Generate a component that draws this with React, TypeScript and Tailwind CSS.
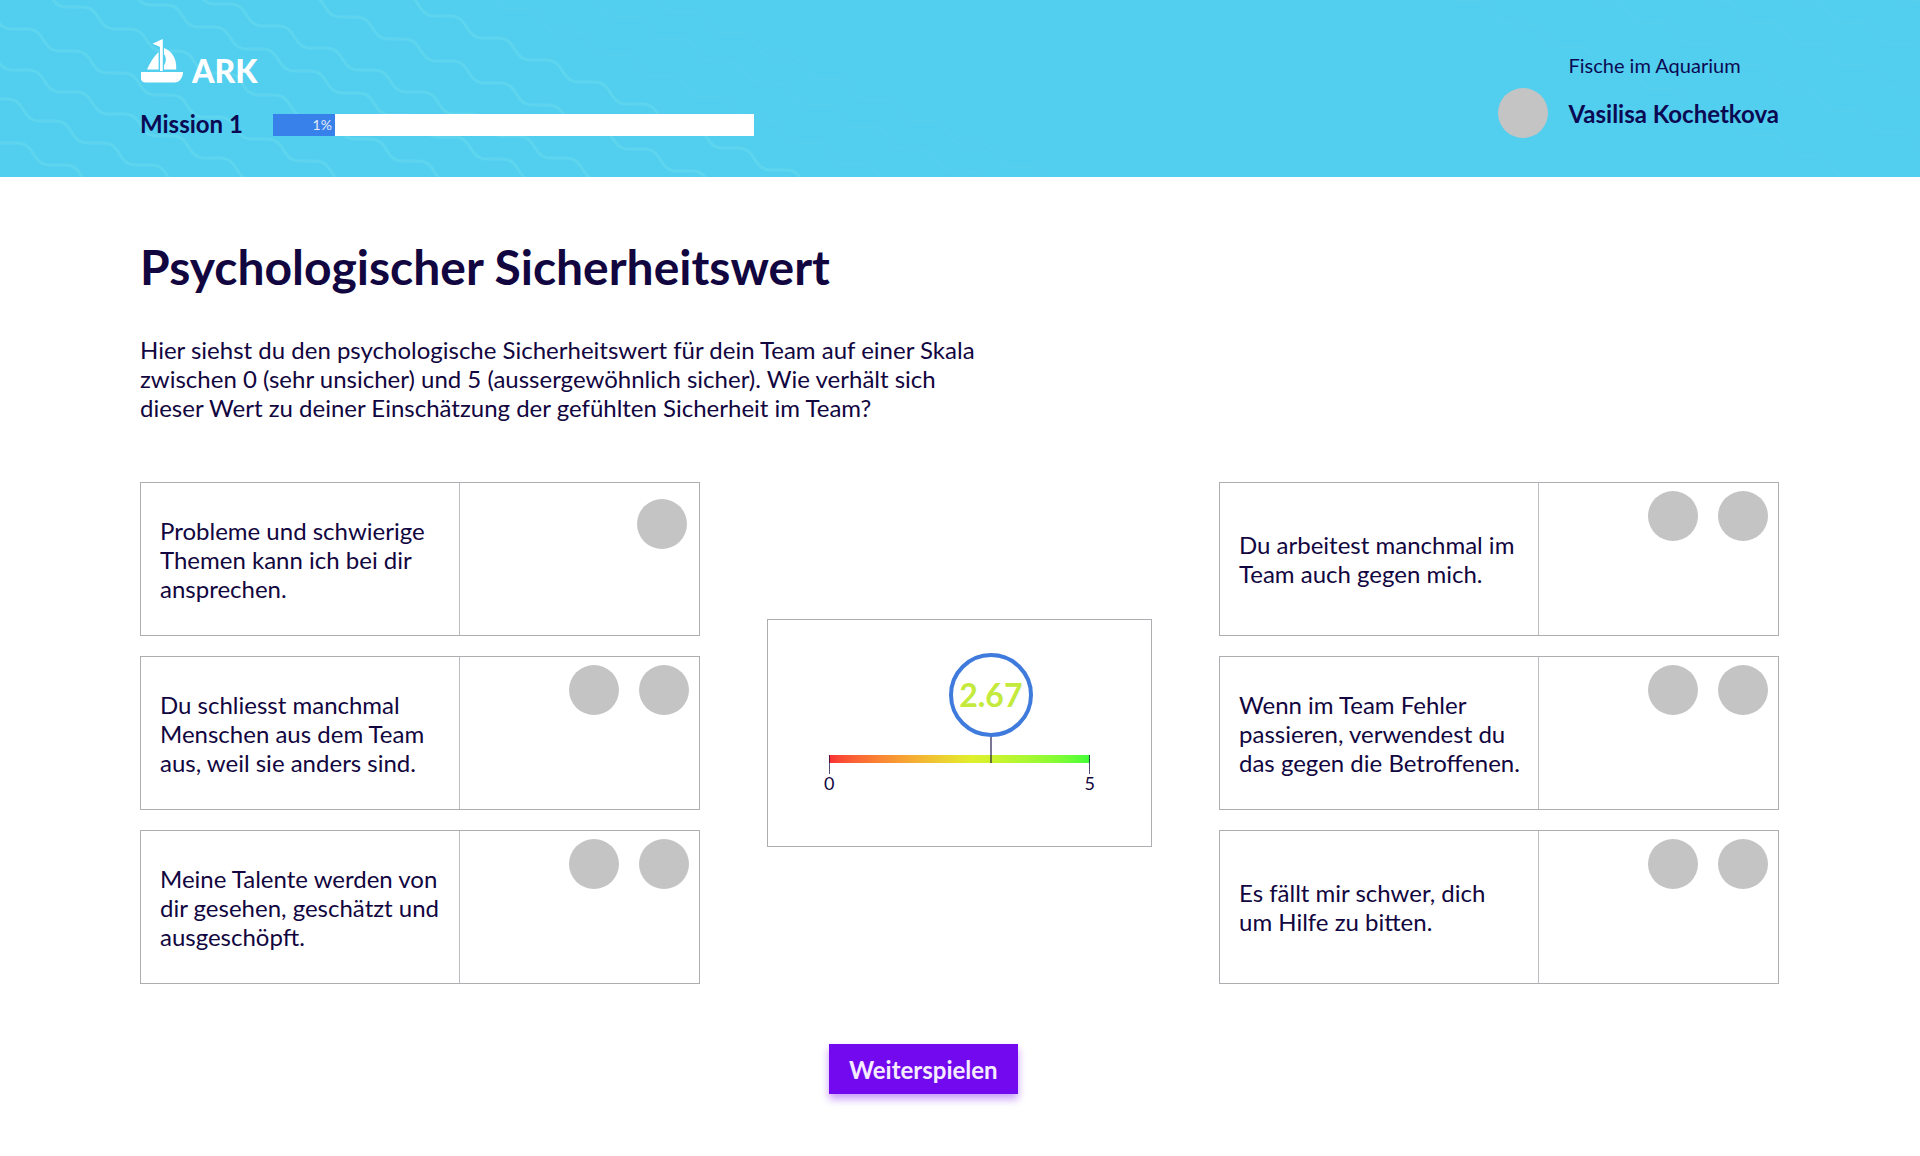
const waveStep = ' h15 c19 0 14 22 33 22';

const waves = [
  { x: -94, y: 99 },
  { x: -56, y: 77 },
  { x: -83, y: 26 },
  { x: -36, y: 7 },
  { x: -29, y: -37 },
  { x: 7, y: -61 },
  { x: 119, y: -40 },
  { x: 245, y: -27 },
  { x: 339, y: -28 },
  { x: 415, y: -34, faint: true },
  { x: 521, y: -27, faint: true },
  { x: 581, y: -32, faint: true },
  { x: 1416, y: -20, faint: true },
  { x: 1500, y: -44, faint: true },
  { x: 1610, y: -44, faint: true },
  { x: 1700, y: -44, faint: true },
  { x: 1800, y: -44, faint: true },
];

function Waves() {
  return (
    <svg
      className="pointer-events-none absolute inset-0 h-full w-full"
      fill="none"
      strokeWidth="3"
      aria-hidden="true"
    >
      {waves.map((w) => (
        <path
          key={`${w.x}:${w.y}`}
          d={`M${w.x} ${w.y}${waveStep.repeat(12)}`}
          stroke="#7ce8f6"
          strokeOpacity={w.faint ? 0.08 : 0.28}
        />
      ))}
    </svg>
  );
}

function BoatIcon() {
  return (
    <svg className="h-11 w-[42px]" viewBox="0 0 42 44" fill="#fff" aria-hidden="true">
      <path d="M19 1.2 L21.8 0 V32 H19 V8 L17 7 L11.4 4.8 Z" />
      <path d="M17.6 13 V30.6 H6 C9.5 23 12.5 18 17.6 13 Z" />
      <path d="M23 9 C31.5 12.5 36 20 35.2 30.6 H23 V26.5 C25.5 22.5 25.5 18.5 23 15 Z" />
      <path d="M0 33 H42 C42 38.5 38.5 43.5 33.5 43.5 H4.5 C2 43.5 0 42 0 39.5 Z" />
    </svg>
  );
}

function Avatar() {
  return <span className="block size-[50px] shrink-0 rounded-full bg-[#c4c4c4]" />;
}

type Item = { text: string; avatars: number };

const leftItems: Item[] = [
  { text: 'Probleme und schwierige\nThemen kann ich bei dir\nansprechen.', avatars: 1 },
  { text: 'Du schliesst manchmal\nMenschen aus dem Team\naus, weil sie anders sind.', avatars: 2 },
  { text: 'Meine Talente werden von\ndir gesehen, geschätzt und\nausgeschöpft.', avatars: 2 },
];

const rightItems: Item[] = [
  { text: 'Du arbeitest manchmal im\nTeam auch gegen mich.', avatars: 2 },
  { text: 'Wenn im Team Fehler\npassieren, verwendest du\ndas gegen die Betroffenen.', avatars: 2 },
  { text: 'Es fällt mir schwer, dich\num Hilfe zu bitten.', avatars: 2 },
];

function Column({ items }: { items: Item[] }) {
  return (
    <ul className="flex flex-col gap-5">
      {items.map((item) => (
        <li
          key={item.text}
          className="grid min-h-[154px] grid-cols-[320fr_239fr] border border-[#adadb2]"
        >
          <p className="flex items-center border-r border-[#bdbdc1] pl-[19px] text-2xl leading-[29px] whitespace-pre-line">
            {item.text}
          </p>
          <div
            className={
              item.avatars === 1
                ? 'flex justify-end gap-5 pt-4 pr-3'
                : 'flex justify-end gap-5 pt-2 pr-[10px]'
            }
          >
            {Array.from({ length: item.avatars }, (_, i) => (
              <Avatar key={i} />
            ))}
          </div>
        </li>
      ))}
    </ul>
  );
}

function Scale() {
  return (
    <div className="self-center border border-[#adadb2] px-[61px] pt-[33px] pb-[52px]">
      <div className="relative h-[102px]">
        <div className="absolute top-0 left-[62%] flex size-[84px] -translate-x-1/2 items-center justify-center rounded-full border-4 border-[#3f7bdc] text-[32px] leading-10 font-bold text-[#c3ea3c]">
          2.67
        </div>
      </div>
      <div className="relative h-2 bg-linear-to-r from-[#f92f33] via-[#dff02c] via-55% to-[#3dff38]">
        <span className="absolute bottom-0 left-[62%] h-[26px] w-[2px] -translate-x-1/2 bg-[#0f0540]/55" />
        <span className="absolute top-0 left-0 h-[19px] w-px bg-[#0f0540]/70" />
        <span className="absolute top-0 right-0 h-[19px] w-px bg-[#0f0540]/70" />
      </div>
      <div className="-mx-[5px] flex justify-between pt-[9px] text-lg leading-[22px]">
        <span>0</span>
        <span>5</span>
      </div>
    </div>
  );
}

export default function App() {
  return (
    <div className="min-h-screen bg-white font-['Lato',sans-serif] text-[#120640]">
      <header className="relative flex min-h-[177px] justify-between bg-[#52ceee] pr-[141px] pl-[140px] text-[#0a0a52]">
        <Waves />
        <div className="relative pt-[39px]">
          <div className="flex items-end gap-[9px] pl-px text-white">
            <BoatIcon />
            <span className="text-[32px] leading-[25px] font-black">ARK</span>
          </div>
          <div className="flex items-center gap-[30px] pt-[27px]">
            <span className="pb-px text-2xl leading-[28px] font-bold">Mission 1</span>
            <div
              role="progressbar"
              aria-label="Mission 1"
              aria-valuenow={1}
              aria-valuemin={0}
              aria-valuemax={100}
              className="h-[22px] w-[481px] bg-white"
            >
              <div className="flex h-full w-[62px] items-center justify-end bg-[#3880ea] pr-[3px] text-sm leading-4 text-white/85">
                1%
              </div>
            </div>
          </div>
        </div>
        <div className="relative pt-[53px]">
          <p className="pl-[70px] text-xl leading-6">Fische im Aquarium</p>
          <div className="flex items-center gap-5 pt-[11px]">
            <Avatar />
            <span className="text-2xl leading-[29px] font-bold">Vasilisa Kochetkova</span>
          </div>
        </div>
      </header>

      <main className="pt-[61px] pr-[141px] pb-[62px] pl-[140px]">
        <h1 className="text-5xl leading-[58px] font-bold">Psychologischer Sicherheitswert</h1>
        <p className="pt-[39px] text-2xl leading-[29px] whitespace-pre-line">
          {
            'Hier siehst du den psychologische Sicherheitswert für dein Team auf einer Skala\nzwischen 0 (sehr unsicher) und 5 (aussergewöhnlich sicher). Wie verhält sich\ndieser Wert zu deiner Einschätzung der gefühlten Sicherheit im Team?'
          }
        </p>
        <div className="grid grid-cols-[560fr_385fr_560fr] gap-x-[67px] gap-y-[60px] pt-[60px]">
          <Column items={leftItems} />
          <Scale />
          <Column items={rightItems} />
          <div className="col-start-2 pl-[62px]">
            <button
              type="button"
              className="h-[50px] bg-[#7209ee] px-5 text-2xl leading-[29px] font-bold whitespace-nowrap text-[#f6ecff] shadow-[0_5px_8px_rgba(114,9,238,0.4)]"
            >
              Weiterspielen
            </button>
          </div>
        </div>
      </main>
    </div>
  );
}
